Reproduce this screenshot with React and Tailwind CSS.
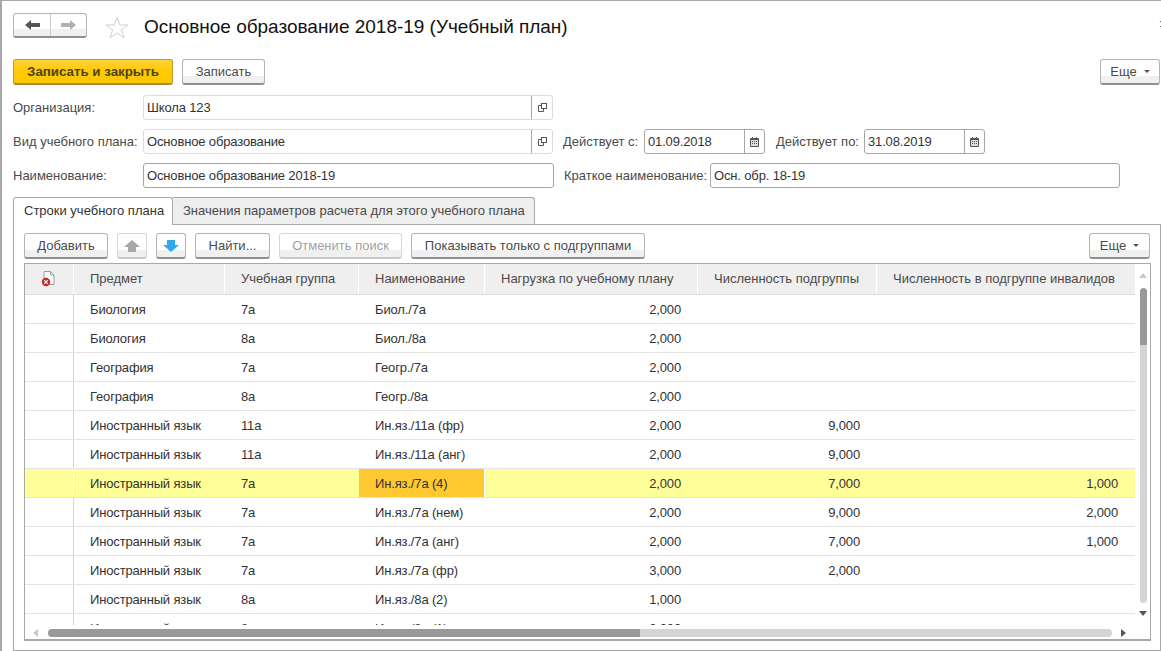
const F = '"Liberation Sans", Arial, sans-serif';

const btn = "flex items-center justify-center rounded-[3px] border border-[#b4b4b4] border-b-2 border-b-[#8f8f8f] bg-[linear-gradient(#ffffff_0,#ffffff_70%,#f0f0f0_70%)] text-[13px] text-[#4a4a4a] h-[26px]";
const btnOff = "flex items-center justify-center rounded-[3px] border border-[#d8d8d8] border-b-2 border-b-[#c8c8c8] bg-[linear-gradient(#ffffff_0,#ffffff_70%,#f0f0f0_70%)] text-[13px] text-[#a0a0a0] h-[26px]";

function OpenIcon() {
  return (
    <svg width="9" height="9" viewBox="0 0 9 9" fill="none" stroke="#555" strokeWidth="1">
      <rect x="3.5" y="0.5" width="5" height="5" fill="#fff" />
      <path d="M3.5 2.5H0.5V8.5H5.5V5.5" />
    </svg>
  );
}

function CalIcon() {
  return (
    <svg width="9" height="10" viewBox="0 0 9 10">
      <rect x="0" y="1" width="9" height="9" rx="1" fill="#555" />
      <rect x="2" y="0" width="1" height="2" fill="#555" />
      <rect x="6" y="0" width="1" height="2" fill="#555" />
      <rect x="1" y="3" width="7" height="6" fill="#ddd" />
      <path d="M2 4h1v1H2zM4 4h1v1H4zM6 4h1v1H6zM2 6h1v1H2zM4 6h1v1H4zM6 6h1v1H6z" fill="#555" />
    </svg>
  );
}

function Field({ w, value, action, light }) {
  const b = light ? "border-[#dcdcdc]" : "border-[#a6a6a6]";
  return (
    <div className={`flex h-[25px] shrink-0 items-center rounded-[3px] border bg-white ${b}`} style={{ width: w }}>
      <div className="flex-1 truncate pl-[3px] text-[13px] tracking-[-0.15px] text-[#333]">{value}</div>
      {action === "open" && (
        <div className="flex h-full w-[21px] items-center justify-center border-l border-l-[#a6a6a6]">
          <OpenIcon />
        </div>
      )}
      {action === "cal" && (
        <div className="flex h-full w-[20px] items-center justify-center border-l border-l-[#a6a6a6]">
          <CalIcon />
        </div>
      )}
    </div>
  );
}

function Caret() {
  return <span className="ml-[7px] inline-block h-0 w-0 border-x-[3px] border-t-[3px] border-x-transparent border-t-[#555]" />;
}

const cols = [49, 151, 134, 126, 213, 179, 258];
const head = ["", "Предмет", "Учебная группа", "Наименование", "Нагрузка по учебному плану", "Численность подгруппы", "Численность в подгруппе инвалидов"];
const rows = [
  ["Биология", "7а", "Биол./7а", "2,000", "", ""],
  ["Биология", "8а", "Биол./8а", "2,000", "", ""],
  ["География", "7а", "Геогр./7а", "2,000", "", ""],
  ["География", "8а", "Геогр./8а", "2,000", "", ""],
  ["Иностранный язык", "11а", "Ин.яз./11а (фр)", "2,000", "9,000", ""],
  ["Иностранный язык", "11а", "Ин.яз./11а (анг)", "2,000", "9,000", ""],
  ["Иностранный язык", "7а", "Ин.яз./7а (4)", "2,000", "7,000", "1,000"],
  ["Иностранный язык", "7а", "Ин.яз./7а (нем)", "2,000", "9,000", "2,000"],
  ["Иностранный язык", "7а", "Ин.яз./7а (анг)", "2,000", "7,000", "1,000"],
  ["Иностранный язык", "7а", "Ин.яз./7а (фр)", "3,000", "2,000", ""],
  ["Иностранный язык", "8а", "Ин.яз./8а (2)", "1,000", "", ""],
  ["Иностранный язык", "8а", "Ин.яз./8а (1)", "2,000", "", ""],
];

function Row({ r, sel }) {
  const cellBase = "flex h-full shrink-0 items-center pt-px text-[13px] tracking-[-0.15px] text-[#333]";
  return (
    <div className={`flex h-[29px] shrink-0 border-b border-b-[#e4e4e4] ${sel ? "bg-[#ffff99]" : ""}`}>
      <div className={`h-full shrink-0 border-r ${sel ? "border-r-white" : "border-r-[#d4d4d4]"}`} style={{ width: cols[0] }} />
      {r.map((v, i) => {
        const right = i >= 3;
        const orange = sel && i === 2;
        return (
          <div
            key={i}
            className={`${cellBase} ${right ? "justify-end pr-[17px]" : orange ? "pl-[16px] bg-[#fec831] border-r border-r-white" : "pl-[16px]"}`}
            style={{ width: cols[i + 1] }}
          >
            {v}
          </div>
        );
      })}
    </div>
  );
}

export default function App() {
  return (
    <div className="flex h-[651px] w-[1161px] flex-col overflow-hidden border-t border-l-2 border-[#a8a8a8] bg-white pl-[11px] text-[#4a4a4a]" style={{ fontFamily: F }}>
      {/* Header */}
      <div className="mt-[12px] flex h-[25px] shrink-0 items-center">
        <div className="flex h-[25px] w-[74px] rounded-[3px] border border-[#b4b4b4] border-b-2 border-b-[#8f8f8f] bg-[linear-gradient(#ffffff_0,#ffffff_70%,#f0f0f0_70%)]">
          <div className="flex w-[37px] items-center justify-center border-r border-r-[#c8c8c8]">
            <svg width="15" height="10" viewBox="0 0 15 10"><path d="M0 5L6 0V3H15V7H6V10Z" fill="#555" /></svg>
          </div>
          <div className="flex flex-1 items-center justify-center">
            <svg width="15" height="10" viewBox="0 0 15 10"><path d="M15 5L9 0V3H0V7H9V10Z" fill="#b0b0b0" /></svg>
          </div>
        </div>
        <svg className="ml-[18px] mt-[4px]" width="24" height="24" viewBox="0 0 24 24" fill="#fff" stroke="#cfcfcf" strokeWidth="1">
          <path d="M12 1.5L14.8 9H23L16.4 13.8L19 22L12 17L5 22L7.6 13.8L1 9H9.2Z" />
        </svg>
        <div className="ml-[15px] mt-[3px] text-[19px] tracking-[-0.02px] text-[#111]">Основное образование 2018-19 (Учебный план)</div>
        <div className="-mr-px ml-auto self-start text-[11px] leading-[20px] text-[#555]">:</div>
      </div>

      {/* Command bar */}
      <div className="mt-[21px] flex h-[26px] shrink-0 items-center">
        <div className="flex h-[26px] w-[160px] items-center justify-center rounded-[3px] border border-[#b89a3c] border-b-2 border-b-[#a88a2c] bg-[linear-gradient(#ffd23c,#ffc800_50%)] text-[13.3px] font-bold text-[#4d4516]">
          Записать и закрыть
        </div>
        <div className={`${btn} ml-[9px] w-[83px]`}>Записать</div>
        <div className={`${btn} ml-auto mr-px w-[60px] shrink-0`}>Еще<Caret /></div>
      </div>

      {/* Fields */}
      <div className="mt-[10px] flex h-[25px] shrink-0 items-center text-[13px]">
        <div className="w-[130px] shrink-0">Организация:</div>
        <Field w={410} value="Школа 123" action="open" light />
      </div>
      <div className="mt-[9px] flex h-[25px] shrink-0 items-center text-[13px]">
        <div className="w-[130px] shrink-0">Вид учебного плана:</div>
        <Field w={410} value="Основное образование" action="open" light />
        <div className="ml-[10px] w-[81px] shrink-0">Действует с:</div>
        <Field w={121} value="01.09.2018" action="cal" />
        <div className="ml-[11px] w-[88px] shrink-0">Действует по:</div>
        <Field w={121} value="31.08.2019" action="cal" />
      </div>
      <div className="mt-[9px] flex h-[25px] shrink-0 items-center text-[13px]">
        <div className="w-[130px] shrink-0">Наименование:</div>
        <Field w={411} value="Основное образование 2018-19" />
        <div className="ml-[10px] w-[146px] shrink-0 whitespace-nowrap">Краткое наименование:</div>
        <Field w={410} value="Осн. обр. 18-19" />
      </div>

      {/* Tabs */}
      <div className="relative z-10 mt-[9px] flex h-[28px] shrink-0 items-stretch">
        <div className="flex h-[28px] w-[160px] items-center rounded-t-[3px] border border-b-0 border-[#a8a8a8] bg-white pb-[1px] pl-[10px] text-[13px] text-[#333]">
          Строки учебного плана
        </div>
        <div className="flex h-[27px] w-[362px] items-center rounded-tr-[3px] border border-l-0 border-b-0 border-[#a8a8a8] bg-[#eeeeee] pl-[10px] text-[13px] text-[#4a4a4a]">
          Значения параметров расчета для этого учебного плана
        </div>
      </div>

      {/* Panel */}
      <div className="-mt-px flex h-[427px] w-[1148px] shrink-0 flex-col border border-[#a8a8a8] pl-[10px] pr-[9px]">
        <div className="mt-[8px] flex h-[26px] shrink-0 items-center">
          <div className={`${btn} w-[84px]`}>Добавить</div>
          <div className={`${btnOff} ml-[9px] w-[30px]`}>
            <svg width="16" height="12" viewBox="0 0 16 12"><path d="M8 0L16 7H12V12H4V7H0Z" fill="#a8a8a8" /></svg>
          </div>
          <div className={`${btn} ml-[9px] w-[30px]`}>
            <svg width="16" height="12" viewBox="0 0 16 12"><path d="M8 12L16 5H12V0H4V5H0Z" fill="#2da9ee" /></svg>
          </div>
          <div className={`${btn} ml-[9px] w-[75px]`}>Найти...</div>
          <div className={`${btnOff} ml-[9px] w-[123px]`}>Отменить поиск</div>
          <div className={`${btn} ml-[9px] w-[234px]`}>Показывать только с подгруппами</div>
          <div className={`${btn} ml-auto mr-px w-[61px]`}>Еще<Caret /></div>
        </div>

        {/* Table */}
        <div className="mt-[4px] flex h-[378px] w-[1127px] shrink-0 flex-col border border-[#a8a8a8] border-b-2">
          <div className="flex h-[361px] shrink-0">
            <div className="flex w-[1110px] shrink-0 flex-col overflow-hidden">
              <div className="flex h-[31px] shrink-0 border-b border-b-[#dcdcdc]">
                {head.map((h, i) => (
                  <div
                    key={i}
                    className="flex h-full shrink-0 items-center border-r border-r-white bg-[#efefef] pl-[16px] text-[13px] text-[#4a4a4a] last:border-r-0"
                    style={{ width: cols[i] }}
                  >
                    {i === 0 && (
                      <svg width="14" height="16" viewBox="0 0 14 16">
                        <path d="M3 .5H9.5L13 4V13.5H3Z" fill="#fff" stroke="#999" />
                        <path d="M9.5 .5V4H13" fill="none" stroke="#999" />
                        <circle cx="5" cy="11" r="4.2" fill="#c8242c" />
                        <path d="M3.2 9.2L6.8 12.8M6.8 9.2L3.2 12.8" stroke="#fff" strokeWidth="1.2" />
                      </svg>
                    )}
                    {h}
                  </div>
                ))}
              </div>
              {rows.map((r, i) => (
                <Row key={i} r={r} sel={i === 6} />
              ))}
            </div>
            {/* Vertical scrollbar */}
            <div className="flex w-[15px] shrink-0 flex-col items-center pl-px">
              <div className="mt-[9px] h-0 w-0 border-x-[4px] border-b-[5px] border-x-transparent border-b-[#c8c8c8]" />
              <div className="mt-[10px] h-[57px] w-[7px] rounded-t-[4px] bg-[#999999]" />
              <div className="h-[258px] w-[7px] rounded-b-[4px] bg-[#d4d4d4]" />
              <div className="mt-[8px] h-0 w-0 border-x-[4px] border-t-[5px] border-x-transparent border-t-[#555]" />
            </div>
          </div>
          {/* Horizontal scrollbar */}
          <div className="flex h-[15px] shrink-0 items-center pl-[8px]">
            <div className="h-0 w-0 border-y-[4px] border-r-[5px] border-y-transparent border-r-[#c8c8c8]" />
            <div className="ml-[10px] h-[8px] w-[592px] rounded-l-[4px] bg-[#999999]" />
            <div className="h-[8px] w-[472px] rounded-r-[4px] bg-[#d4d4d4]" />
            <div className="ml-[9px] h-0 w-0 border-y-[4px] border-l-[5px] border-y-transparent border-l-[#555]" />
          </div>
        </div>
      </div>
    </div>
  );
}
